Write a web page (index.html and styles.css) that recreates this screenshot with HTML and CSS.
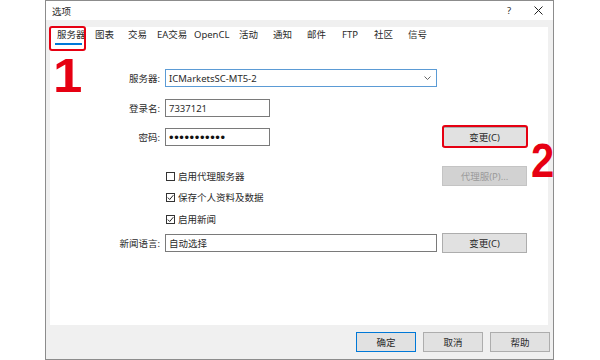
FILE: index.html
```html
<!DOCTYPE html>
<html lang="zh-CN">
<head>
    <meta charset="UTF-8">
    <title>选项</title>
    <link rel="stylesheet" href="styles.css">
</head>
<body>
    <div class="dialog">
        <div class="titlebar">
            <span class="title">选项</span>
            <span class="help">?</span>
            <svg class="close" width="9" height="9" viewBox="0 0 9 9">
                <path d="M0.5 0.5 L8.5 8.5 M8.5 0.5 L0.5 8.5" stroke="#222" stroke-width="1" fill="none"/>
            </svg>
        </div>

        <div class="panel">
            <div class="tabs">
                <span class="tab active">服务器</span>
                <span class="tab">图表</span>
                <span class="tab">交易</span>
                <span class="tab">EA交易</span>
                <span class="tab">OpenCL</span>
                <span class="tab">活动</span>
                <span class="tab">通知</span>
                <span class="tab">邮件</span>
                <span class="tab">FTP</span>
                <span class="tab">社区</span>
                <span class="tab">信号</span>
            </div>

            <div class="form">
                <div class="row row-server">
                    <label>服务器:</label>
                    <div class="field combo">
                        <span>ICMarketsSC-MT5-2</span>
                        <svg width="7" height="4" viewBox="0 0 7 4">
                            <path d="M0.5 0.5 L3.5 3.5 L6.5 0.5" stroke="#666" stroke-width="1" fill="none"/>
                        </svg>
                    </div>
                </div>

                <div class="row row-login">
                    <label>登录名:</label>
                    <div class="field short">7337121</div>
                </div>

                <div class="row row-pass">
                    <label>密码:</label>
                    <div class="field short password">•••••••••••</div>
                    <button class="btn wide marked">变更(C)</button>
                </div>

                <div class="row row-proxy">
                    <span></span>
                    <div class="check">
                        <span class="box"></span>
                        <span>启用代理服务器</span>
                    </div>
                    <button class="btn wide disabled">代理服(P)...</button>
                </div>

                <div class="row row-save">
                    <span></span>
                    <div class="check">
                        <span class="box">
                            <svg width="7" height="7" viewBox="0 0 7 7"><path d="M0.8 3.6 L2.7 5.5 L6.3 1.2" stroke="#222" stroke-width="1" fill="none"/></svg>
                        </span>
                        <span>保存个人资料及数据</span>
                    </div>
                </div>

                <div class="row row-news">
                    <span></span>
                    <div class="check">
                        <span class="box">
                            <svg width="7" height="7" viewBox="0 0 7 7"><path d="M0.8 3.6 L2.7 5.5 L6.3 1.2" stroke="#222" stroke-width="1" fill="none"/></svg>
                        </span>
                        <span>启用新闻</span>
                    </div>
                </div>

                <div class="row row-lang">
                    <label>新闻语言:</label>
                    <div class="field">自动选择</div>
                    <button class="btn wide">变更(C)</button>
                </div>
            </div>
        </div>

        <div class="footer">
            <button class="btn default">确定</button>
            <button class="btn">取消</button>
            <button class="btn">帮助</button>
        </div>

        <!-- red step numbers drawn over the dialog -->
        <span class="mark mark-1">1</span>
        <span class="mark mark-2">2</span>
    </div>
</body>
</html>
```

FILE: styles.css
```css
body {
    margin: 0;
    background: #fff;
    font-family: "Noto Sans", "Noto Sans CJK SC", sans-serif;
    font-size: 9.5px;
    color: #2a2a2a;
}

.dialog {
    position: relative;
    margin-left: 45px;
    width: 509px;
    height: 360px;
    box-sizing: border-box;
    border: 1px solid #8c8c8c;
    background: #f0f0f0;
    display: flex;
    flex-direction: column;
}

.titlebar {
    height: 19px;
    background: #fff;
    display: flex;
    align-items: center;
    padding: 0 10px 0 6px;
}

.title {
    flex: 1;
}

.help {
    margin-right: 23px;
}

.panel {
    margin: 7px 5px 0 4px;
    height: 298px;
    background: #fff;
}

/* tabs */
.tabs {
    display: grid;
    grid-template-columns: 38px 33px 29px 37px 45px 34px 34px 35px 32px 34px auto;
    height: 24px;
    padding-left: 1px;
}

.tab {
    position: relative;
    padding: 2px 0 0 6px;
    line-height: 12px;
    white-space: nowrap;
}

.tab.active::after {
    content: "";
    position: absolute;
    left: 4px;
    top: 16px;
    width: 27px;
    height: 2px;
    background: #0078d7;
}

.tab.active::before {
    content: "";
    position: absolute;
    left: -2px;
    top: -1px;
    width: 37px;
    height: 25px;
    box-sizing: border-box;
    border: 2px solid #e60012;
    border-radius: 3px;
}

/* form */
.form {
    padding-top: 18px;
}

.row {
    display: grid;
    grid-template-columns: 110px 272px 85px;
    column-gap: 5px;
    align-items: center;
}

.row label {
    text-align: right;
}

.row-server { height: 18px; }
.row-login { height: 18px; margin-top: 12px; }
.row-pass { height: 20px; margin-top: 10px; }
.row-proxy { height: 19px; margin-top: 19px; }
.row-save { height: 14px; margin-top: 5px; }
.row-news { height: 14px; margin-top: 8px; }
.row-lang { height: 19px; margin-top: 7px; }

.field {
    height: 18px;
    box-sizing: border-box;
    border: 1px solid #7a7a7a;
    background: #fff;
    padding: 0 5px 0 3px;
    display: flex;
    align-items: center;
    justify-content: space-between;
}

.field.short {
    width: 105px;
}

.combo {
    border-color: #5b9bd5;
}

.password {
    font-family: "Liberation Sans", sans-serif;
    font-size: 13px;
    letter-spacing: 0.6px;
    color: #111;
}

.check {
    display: flex;
    align-items: center;
    gap: 3px;
    margin-left: 1px;
}

.box {
    width: 9px;
    height: 9px;
    box-sizing: border-box;
    border: 1px solid #333;
    background: #fff;
    display: flex;
    align-items: center;
    justify-content: center;
}

/* buttons */
.btn {
    position: relative;
    width: 60px;
    height: 20px;
    box-sizing: border-box;
    padding: 0;
    background: #e1e1e1;
    border: 1px solid #adadad;
    font: inherit;
    color: #2a2a2a;
}

.btn.wide {
    width: 85px;
}

.btn.default {
    border-color: #0078d7;
}

.btn.disabled {
    background: #d2d2d2;
    border-color: #c4c4c4;
    color: #9a9a9a;
}

.btn.marked::before {
    content: "";
    position: absolute;
    left: -1px;
    top: -3px;
    right: -2px;
    bottom: -2px;
    border: 2px solid #e60012;
    border-radius: 3px;
}

.footer {
    flex: 1;
    display: flex;
    justify-content: flex-end;
    align-items: center;
    gap: 7px;
    padding-right: 3px;
}

/* red step numbers */
.mark {
    position: absolute;
    font-family: "Liberation Sans", sans-serif;
    font-weight: bold;
    font-size: 48px;
    line-height: 1;
    color: #e60012;
    transform-origin: left top;
}

.mark-1 {
    left: 7px;
    top: 51px;
    transform: scaleX(1.1);
}

.mark-2 {
    left: 485px;
    top: 136px;
    transform: scaleX(0.87);
}
```
